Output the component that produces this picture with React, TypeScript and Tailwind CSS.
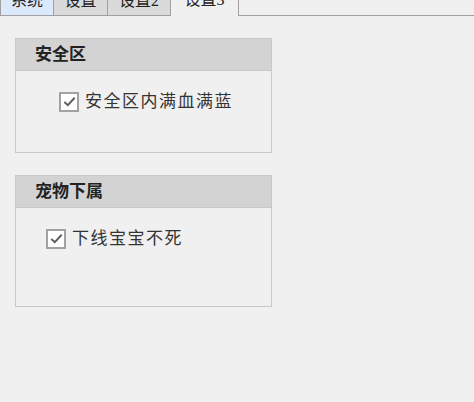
import React, { JSX } from "react";

const font = { fontFamily: '"Liberation Serif", "Noto Sans CJK SC", serif' };

function Check({ on }: { on: boolean }): JSX.Element {
  return (
    <span className="flex h-[20px] w-[20px] shrink-0 items-center justify-center border-2 border-[#a2a2a2] bg-white">
      {on && (
        <svg viewBox="0 0 16 16" className="h-[15px] w-[15px]">
          <path d="M2.5 8.5 L6.2 12 L13.5 4" fill="none" stroke="#5c5c5c" strokeWidth="2" />
        </svg>
      )}
    </span>
  );
}

function Panel({
  title,
  label,
  inset,
  bodyH,
}: {
  title: string;
  label: string;
  inset: string;
  bodyH: string;
}): JSX.Element {
  return (
    <section className="w-[257px] border border-[#c8c8c8]">
      <div className="flex h-[32px] items-center border-b border-[#c8c8c8] bg-[#d3d3d3] pl-[19px] text-[17px] font-bold text-[#222]">
        {title}
      </div>
      <div className={`${bodyH} pt-[18px] ${inset}`}>
        <label className="flex items-center gap-[6px] text-[17px] tracking-[1.5px] text-[#333]">
          <Check on />
          <span>{label}</span>
        </label>
      </div>
    </section>
  );
}

export default function App(): JSX.Element {
  const tabs = [
    { name: "系统", w: "w-[54px]", bg: "bg-[#dce8fb]" },
    { name: "设置", w: "w-[54px]", bg: "bg-[#dadada]" },
    { name: "设置2", w: "w-[63px]", bg: "bg-[#dadada]" },
  ];

  return (
    <div className="min-h-screen w-[474px] bg-[#f0f0f0]" style={font}>
      {/* tab strip, scrolled so only the lower part shows */}
      <div className="flex h-[16px] items-end overflow-hidden">
        {tabs.map((t) => (
          <div
            key={t.name}
            className={`${t.w} ${t.bg} h-[28px] shrink-0 border border-l-0 first:border-l border-[#a0a0a0] pt-[4px] text-center text-[16px] leading-[16px] text-[#222]`}
          >
            {t.name}
          </div>
        ))}
        <div className="h-[28px] w-[67px] shrink-0 pt-[4px] text-center text-[16px] leading-[16px] text-[#222]">
          设置3
        </div>
        <div className="h-[28px] flex-1 border-b border-l border-[#a0a0a0]" />
      </div>

      <div className="flex flex-col gap-[22px] pl-[15px] pt-[22px]">
        <Panel title="安全区" label="安全区内满血满蓝" inset="pl-[43px]" bodyH="h-[81px]" />
        <Panel title="宠物下属" label="下线宝宝不死" inset="pl-[30px]" bodyH="h-[98px]" />
      </div>
    </div>
  );
}
